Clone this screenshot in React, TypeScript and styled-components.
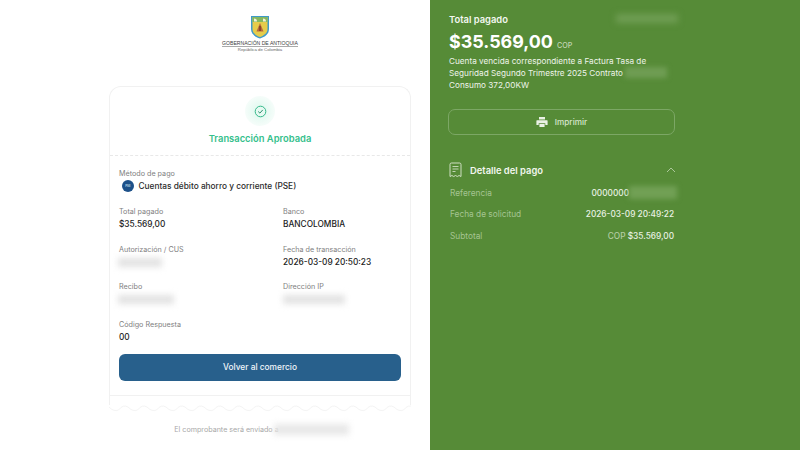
import React from "react";
import styled, { createGlobalStyle } from "styled-components";

const Global = createGlobalStyle`
  html, body { margin: 0; padding: 0; width: 800px; height: 450px; overflow: hidden; background: #fff; }
  body { font-family: Inter, "Liberation Sans", sans-serif; -webkit-font-smoothing: antialiased; }
  * { box-sizing: border-box; }
`;

const Page = styled.div`
  display: grid;
  grid-template-columns: 430px 370px;
  width: 800px;
  height: 450px;
  overflow: hidden;
`;

const LeftPanel = styled.main`
  display: flex;
  flex-direction: column;
  align-items: center;
  padding: 15px 0 0 90px;
  background: #fff;
`;

const Logo = styled.header`
  display: flex;
  flex-direction: column;
  align-items: center;
  height: 71px;
  width: 100%;
`;

const LogoTitle = styled.div`
  margin-top: 1px;
  font-family: "Liberation Sans", sans-serif;
  font-size: 5.1px;
  line-height: 6px;
  color: #3c3c3c;
  border-bottom: 0.5px solid #aaa;
  white-space: nowrap;
`;

const LogoSub = styled.div`
  font-family: "Liberation Sans", sans-serif;
  font-size: 4.3px;
  line-height: 5px;
  color: #666;
`;

const Card = styled.section`
  width: 302px;
  height: 319px;
  border: 1px solid #f1f1f1;
  border-bottom: none;
  border-radius: 12px 12px 0 0;
  display: flex;
  flex-direction: column;
  position: relative;
`;

const CardHead = styled.div`
  height: 69px;
  flex: none;
  display: flex;
  flex-direction: column;
  align-items: center;
  border-bottom: 1px dashed #e8e8e8;
`;

const Glow = styled.div`
  margin-top: 9px;
  width: 30px;
  height: 30px;
  border-radius: 50%;
  background: radial-gradient(circle, #e6faf2 30%, #f2fcf8 60%, #ffffff 100%);
  display: flex;
  align-items: center;
  justify-content: center;
`;

const Title = styled.h1`
  margin: 6px 0 0;
  font-size: 9.4px;
  line-height: 14px;
  font-weight: 600;
  color: #35c08c;
`;

const CardBody = styled.div`
  padding: 13px 9px 0;
  display: flex;
  flex-direction: column;
`;

const Label = styled.div`
  font-size: 7.2px;
  line-height: 10px;
  color: #808080;
`;

const MethodRow = styled.div`
  display: flex;
  align-items: center;
  gap: 4.5px;
  padding-left: 3px;
  height: 13px;
  font-size: 8.3px;
  font-weight: 500;
  color: #2b2b2b;
`;

const PseBadge = styled.span`
  width: 12px;
  height: 12px;
  border-radius: 50%;
  background: #1d5189;
  display: flex;
  align-items: center;
  justify-content: center;
  font-size: 3px;
  font-weight: 600;
  color: #cfe0ee;
`;

const Grid = styled.div`
  display: grid;
  grid-template-columns: 164px 1fr;
  margin-top: 15px;
  row-gap: 13.5px;
`;

const Field = styled.div`
  height: 24px;
`;

const Value = styled.div`
  margin-top: 1px;
  font-size: 8.3px;
  line-height: 12px;
  font-weight: 500;
  color: #222;
  white-space: nowrap;
`;

const Redacted = styled.div<{ $w: number; $h?: number; $tone?: string; $shift?: number }>`
  width: ${(p) => p.$w}px;
  height: ${(p) => p.$h ?? 9}px;
  margin-left: ${(p) => p.$shift ?? 0}px;
  background: ${(p) => p.$tone ?? "#e2e2e2"};
  filter: blur(3px);
  flex: none;
`;

const RedactedValue = styled(Redacted)`
  margin-top: 3px;
`;

const LastField = styled(Field)`
  margin-top: 13.5px;
`;

const BackButton = styled.button`
  margin-top: 10px;
  height: 27px;
  width: 282px;
  border: none;
  border-radius: 6px;
  background: #28608c;
  color: #f1f6fa;
  font-family: inherit;
  font-size: 8.35px;
  font-weight: 500;
`;

const Tear = styled.div`
  position: absolute;
  left: -1px;
  right: -1px;
  top: 308px;
  height: 12px;
  border-top: 1px solid #f1f1f1;
`;

const Wave = styled.svg`
  position: absolute;
  left: 0;
  top: 9px;
  display: block;
`;

const Footer = styled.footer`
  display: flex;
  align-items: center;
  margin-top: 17px;
  height: 14px;
  margin-left: 3px;
  font-size: 7.15px;
  color: #a8a8a8;
  white-space: nowrap;
`;

const RightPanel = styled.aside`
  background: #568b37;
  padding: 12px 125px 0 19px;
  color: #fff;
  display: flex;
  flex-direction: column;
`;

const TotalRow = styled.div`
  display: flex;
  align-items: center;
  justify-content: space-between;
  height: 14px;
  font-size: 9.4px;
  font-weight: 600;
  color: #f3f7f0;
`;

const TotalBlur = styled.div`
  width: 62px;
  height: 9px;
  background: #6f9d53;
  filter: blur(3px);
  margin-top: -1px;
  margin-right: -3px;
`;

const Amount = styled.div`
  display: flex;
  align-items: baseline;
  gap: 4px;
  margin-top: 3px;
  height: 26px;
  font-size: 17.9px;
  line-height: 26px;
  font-weight: 700;
  color: #fff;
`;

const Currency = styled.span`
  font-size: 7.2px;
  font-weight: 500;
  color: #c2d6b4;
`;

const Description = styled.p`
  margin: 0;
  font-size: 8.2px;
  line-height: 12px;
  color: #eef4ea;
`;

const DescriptionBlur = styled.span`
  display: inline-block;
  width: 42px;
  height: 11px;
  margin-left: 2px;
  vertical-align: -2px;
  background: #6f9d53;
  filter: blur(2.5px);
`;

const PrintButton = styled.button`
  margin: 18px 0 0 -1px;
  height: 26px;
  width: 227px;
  border: 1px solid #7ca765;
  border-radius: 7px;
  background: transparent;
  display: flex;
  align-items: center;
  justify-content: center;
  gap: 7px;
  font-family: inherit;
  font-size: 8.2px;
  font-weight: 500;
  color: #d7e5cd;
`;

const DetailHead = styled.div`
  margin-top: 26px;
  height: 18px;
  width: 227px;
  display: flex;
  align-items: center;
  font-size: 9.4px;
  font-weight: 600;
  color: #f2f7ee;
`;

const DetailTitle = styled.span`
  margin-left: 8px;
  flex: 1;
`;

const DetailRow = styled.div`
  width: 225px;
  height: 21.5px;
  display: flex;
  align-items: center;
  justify-content: space-between;
  font-size: 8.3px;
  font-weight: 500;
  color: #e9f1e3;
`;

const DetailRows = styled.div`
  margin-top: 3px;
  display: flex;
  flex-direction: column;
`;

const DetailLabel = styled.span`
  padding-left: 1px;
  font-weight: 400;
  color: #a5c492;
`;

const RefValue = styled.span`
  display: flex;
  align-items: center;
`;

const RefBlur = styled.span`
  width: 48px;
  height: 13px;
  background: #71a055;
  filter: blur(2.5px);
  margin-right: -3px;
`;

const Muted = styled.span`
  color: #b4cda4;
`;

function Shield() {
  return (
    <svg width="20" height="24" viewBox="0 0 20 24" aria-hidden="true">
      <path d="M1 1h18v13c0 5-4 8-9 9.500C5 22 1 19 1 14z" fill="#3f9ac9" />
      <path d="M2.500 2h15v12c0 4-3.500 6.500-7.500 8-4-1.500-7.500-4-7.500-8z" fill="#e6cc4a" />
      <path d="M2.500 2h15v5h-15z" fill="#86b85f" />
      <path d="M10 8l3.500 8.500h-7z" fill="#b8683e" />
      <path d="M4 3.500c2 0 3 1 3 3H4zM13 3.500c2 0 3 1 3 3h-3z" fill="#f4f1d8" />
      <path d="M9.300 11h1.400v5H9.300z" fill="#7a3b22" />
    </svg>
  );
}

function CheckCircle() {
  return (
    <svg width="13" height="13" viewBox="0 0 13 13" fill="none" aria-hidden="true">
      <circle cx="6.500" cy="6.500" r="5.300" stroke="#35b98a" strokeWidth="1" />
      <path d="M4.500 6.800l1.400 1.300 2.600-2.900" stroke="#2c8f6d" strokeWidth="1" strokeLinecap="round" strokeLinejoin="round" />
    </svg>
  );
}

function Printer() {
  return (
    <svg width="12" height="12" viewBox="0 0 12 12" aria-hidden="true">
      <path d="M3 1h6v2.500H3z" fill="#eaf1e5" />
      <path d="M1 4.200h10a.6.6 0 0 1 .6.6V9H9.300V7.200H2.700V9H.4V4.800a.6.6 0 0 1 .6-.6z" fill="#eaf1e5" />
      <path d="M3.400 8h5.200v3H3.400z" fill="#eaf1e5" />
    </svg>
  );
}

function Receipt() {
  return (
    <svg width="13" height="16" viewBox="0 0 13 16" fill="none" aria-hidden="true">
      <path
        d="M1 2.500A1.500 1.500 0 0 1 2.500 1h8A1.500 1.500 0 0 1 12 2.500V14.500l-1.900-1-1.800 1-1.800-1-1.800 1-1.800-1-1.900 1z"
        stroke="#dce8d3"
        strokeWidth="0.9"
      />
      <path d="M3.500 4.500h6M3.500 7h6M3.500 9.500h3" stroke="#dce8d3" strokeWidth="0.8" />
    </svg>
  );
}

function Chevron() {
  return (
    <svg width="10" height="6" viewBox="0 0 10 6" fill="none" aria-hidden="true">
      <path d="M1 5l4-4 4 4" stroke="#b6cfa6" strokeWidth="0.9" />
    </svg>
  );
}

function WaveEdge() {
  const width = 302;
  const step = 19;
  let d = "M0 2";
  for (let x = 0; x < width; x += step) {
    d += ` q${step / 4} 5 ${step / 2} 3 q${step / 4} -6 ${step / 2} -3`;
  }
  return (
    <Wave width={width} height="10" viewBox={`0 0 ${width} 10`} fill="none" aria-hidden="true">
      <path d={d} stroke="#f4f4f4" strokeWidth="1" />
    </Wave>
  );
}

export default function App() {
  return (
    <>
      <Global />
      <Page>
        <LeftPanel>
          <Logo>
            <Shield />
            <LogoTitle>GOBERNACIÓN DE ANTIOQUIA</LogoTitle>
            <LogoSub>República de Colombia</LogoSub>
          </Logo>
          <Card>
            <CardHead>
              <Glow>
                <CheckCircle />
              </Glow>
              <Title>Transacción Aprobada</Title>
            </CardHead>
            <CardBody>
              <Label>Método de pago</Label>
              <MethodRow>
                <PseBadge>PSE</PseBadge>
                Cuentas débito ahorro y corriente (PSE)
              </MethodRow>
              <Grid>
                <Field>
                  <Label>Total pagado</Label>
                  <Value>$35.569,00</Value>
                </Field>
                <Field>
                  <Label>Banco</Label>
                  <Value>BANCOLOMBIA</Value>
                </Field>
                <Field>
                  <Label>Autorización / CUS</Label>
                  <RedactedValue $w={44} $shift={-1} />
                </Field>
                <Field>
                  <Label>Fecha de transacción</Label>
                  <Value>2026-03-09 20:50:23</Value>
                </Field>
                <Field>
                  <Label>Recibo</Label>
                  <RedactedValue $w={56} $shift={-1} />
                </Field>
                <Field>
                  <Label>Dirección IP</Label>
                  <RedactedValue $w={62} />
                </Field>
              </Grid>
              <LastField>
                <Label>Código Respuesta</Label>
                <Value>00</Value>
              </LastField>
              <BackButton>Volver al comercio</BackButton>
            </CardBody>
            <Tear>
              <WaveEdge />
            </Tear>
          </Card>
          <Footer>
            El comprobante será enviado a
            <Redacted $w={75} $h={11} $tone="#e8e8e8" $shift={-5} />
          </Footer>
        </LeftPanel>
        <RightPanel>
          <TotalRow>
            Total pagado
            <TotalBlur />
          </TotalRow>
          <Amount>
            $35.569,00
            <Currency>COP</Currency>
          </Amount>
          <Description>
            Cuenta vencida correspondiente a Factura Tasa de Seguridad Segundo Trimestre 2025 Contrato
            <DescriptionBlur /> Consumo 372,00KW
          </Description>
          <PrintButton>
            <Printer />
            Imprimir
          </PrintButton>
          <DetailHead>
            <Receipt />
            <DetailTitle>Detalle del pago</DetailTitle>
            <Chevron />
          </DetailHead>
          <DetailRows>
            <DetailRow>
              <DetailLabel>Referencia</DetailLabel>
              <RefValue>
                0000000
                <RefBlur />
              </RefValue>
            </DetailRow>
            <DetailRow>
              <DetailLabel>Fecha de solicitud</DetailLabel>
              <span>2026-03-09 20:49:22</span>
            </DetailRow>
            <DetailRow>
              <DetailLabel>Subtotal</DetailLabel>
              <span>
                <Muted>COP</Muted> $35.569,00
              </span>
            </DetailRow>
          </DetailRows>
        </RightPanel>
      </Page>
    </>
  );
}
